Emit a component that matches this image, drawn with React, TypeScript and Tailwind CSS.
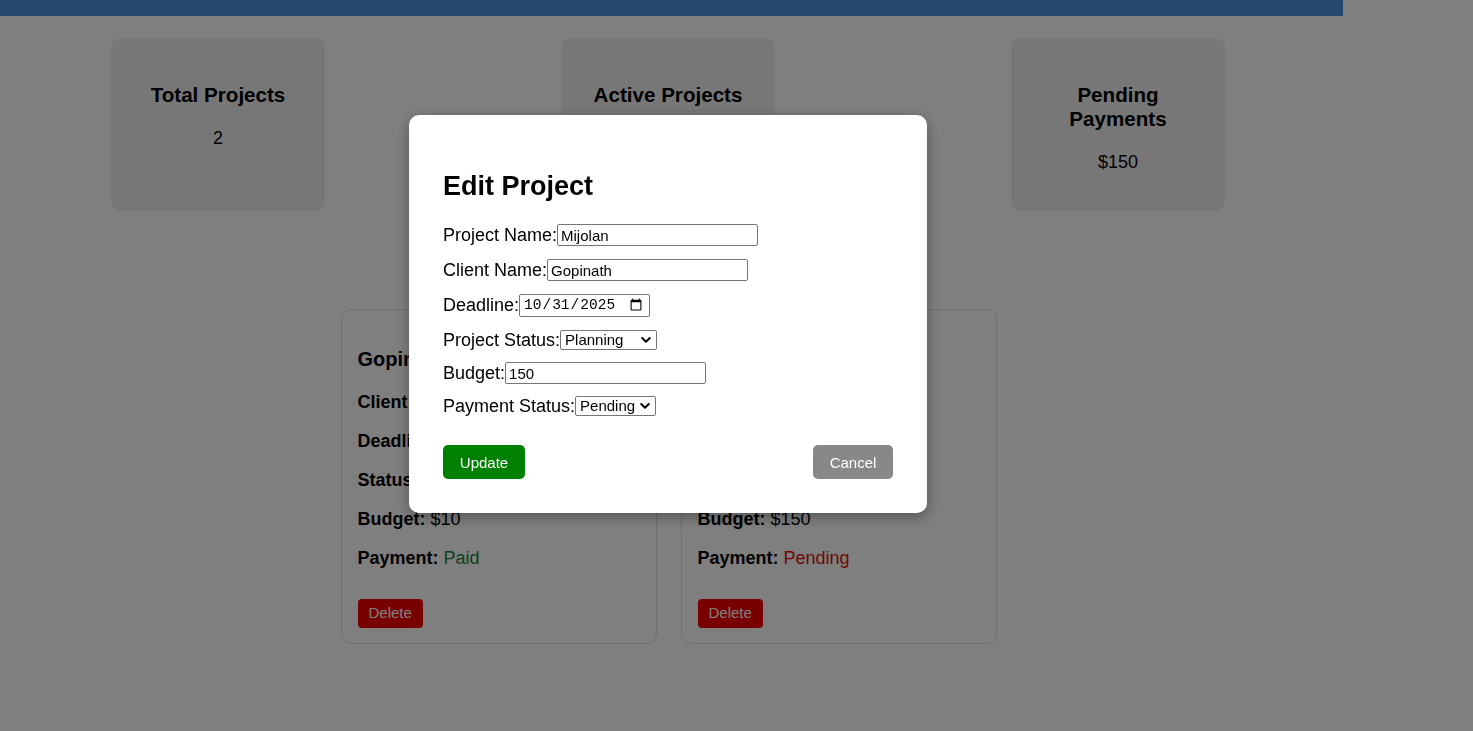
import React from 'react';

const stats = [
  { title: 'Total Projects', value: '2' },
  { title: 'Active Projects', value: '1' },
  { title: 'Pending Payments', value: '$150' },
];

const projects = [
  { name: 'Gopinath', client: 'Gopinath', deadline: '2025-10-20', status: 'Completed', budget: '$10', payment: 'Paid' },
  { name: 'Mijolan', client: 'Gopinath', deadline: '2025-10-31', status: 'Planning', budget: '$150', payment: 'Pending' },
];

const Chevron: React.FC = () => (
  <svg
    className="pointer-events-none absolute right-[6px] top-1/2 -translate-y-1/2"
    width="10"
    height="7"
    viewBox="0 0 10 7"
    fill="none"
  >
    <path d="M1.2 1.5 5 5.2 8.8 1.5" stroke="#000" strokeWidth="1.9" strokeLinecap="round" strokeLinejoin="round" />
  </svg>
);

const App: React.FC = () => {
  return (
    <div className="relative min-h-screen bg-white text-black font-['Liberation_Sans',Arial,sans-serif]">
      <header className="w-[1343px] h-4 bg-[#4a90e2]" />

      <main className="w-[1337px]">
        <section className="flex gap-[236px] pl-[111px] mt-[22px]">
          {stats.map((s) => (
            <div key={s.title} className="w-[214px] h-[173px] rounded-[10px] bg-[#eeeeee] p-5 text-center">
              <h3 className="mt-[24.5px] text-[20.6px] leading-6 font-bold">{s.title}</h3>
              <p className="mt-[21px] text-lg leading-[21px]">{s.value}</p>
            </div>
          ))}
        </section>

        <section className="flex justify-center gap-6 mt-[97.5px]">
          {projects.map((p) => (
            <div
              key={p.name}
              className="w-[316px] rounded-[10px] border border-[#dddddd] px-4 pt-4 pb-[15px] flex flex-col"
            >
              <h3 className="mt-[21px] mb-[21px] text-[20px] leading-6 font-bold">{p.name}</h3>
              <div className="flex flex-col gap-[18px] text-[18px] leading-[21px]">
                <p><span className="font-bold">Client:</span> {p.client}</p>
                <p><span className="font-bold">Deadline:</span> {p.deadline}</p>
                <p><span className="font-bold">Status:</span> {p.status}</p>
                <p><span className="font-bold">Budget:</span> {p.budget}</p>
                <p>
                  <span className="font-bold">Payment:</span>{' '}
                  <span className={p.payment === 'Paid' ? 'text-[#17873a]' : 'text-[#e01010]'}>{p.payment}</span>
                </p>
              </div>
              <button className="self-start mt-[30px] h-[29px] px-[11px] rounded-[4px] bg-[#f00000] text-white text-[15px]">
                Delete
              </button>
            </div>
          ))}
        </section>
      </main>

      {/* modal backdrop */}
      <div className="fixed inset-0 bg-black/50" />
      <div className="fixed left-0 top-0 w-[1336px] flex justify-center pt-[115px]">
        <div className="w-[518px] rounded-[10px] bg-white p-[34px] shadow-[0_4px_14px_rgba(0,0,0,0.35)]">
          <h2 className="mt-[22px] mb-[22px] text-[27px] leading-[31px] font-bold">Edit Project</h2>

          <div className="text-[18px] leading-[21px]">
            <div className="flex items-center h-[22px] mb-[13px]">
              <label>Project Name:</label>
              <input
                defaultValue="Mijolan"
                className="w-[201px] h-[22px] border border-[#767676] rounded-[2px] px-[3px] text-[15px] outline-none"
              />
            </div>
            <div className="flex items-center h-[22px] mb-[13px]">
              <label>Client Name:</label>
              <input
                defaultValue="Gopinath"
                className="w-[201px] h-[22px] border border-[#767676] rounded-[2px] px-[3px] text-[15px] outline-none"
              />
            </div>
            <div className="flex items-center h-[23px] mb-[13px]">
              <label>Deadline:</label>
              <input
                type="date"
                defaultValue="2025-10-31"
                className="w-[131px] h-[23px] border border-[#767676] rounded-[2px] pl-[3px] pr-[4px] text-[14.5px] font-['Liberation_Mono',monospace] outline-none"
              />
            </div>
            <div className="flex items-center h-[20px] mb-[12px]">
              <label>Project Status:</label>
              <div className="relative">
                <select
                  defaultValue="Planning"
                  className="appearance-none block w-[97px] h-[20px] border border-[#767676] rounded-[2px] pl-[4px] text-[15px] leading-[18px] bg-white outline-none"
                >
                  <option>Planning</option>
                  <option>In Progress</option>
                  <option>Completed</option>
                </select>
                <Chevron />
              </div>
            </div>
            <div className="flex items-center h-[22px] mb-[12px]">
              <label>Budget:</label>
              <input
                defaultValue="150"
                className="w-[201px] h-[22px] border border-[#767676] rounded-[2px] px-[3px] text-[15px] outline-none"
              />
            </div>
            <div className="flex items-center h-[20px]">
              <label>Payment Status:</label>
              <div className="relative">
                <select
                  defaultValue="Pending"
                  className="appearance-none block w-[81px] h-[20px] border border-[#767676] rounded-[2px] pl-[4px] text-[15px] leading-[18px] bg-white outline-none"
                >
                  <option>Pending</option>
                  <option>Paid</option>
                </select>
                <Chevron />
              </div>
            </div>
          </div>

          <div className="flex justify-between mt-[29px]">
            <button className="w-[82px] h-[34px] rounded-[5px] bg-[#008000] text-white text-[15px] leading-[18px] pt-px">Update</button>
            <button className="w-[80px] h-[34px] rounded-[5px] bg-[#888888] text-white text-[15px] leading-[18px] pt-px">Cancel</button>
          </div>
        </div>
      </div>
    </div>
  );
};

export default App;
